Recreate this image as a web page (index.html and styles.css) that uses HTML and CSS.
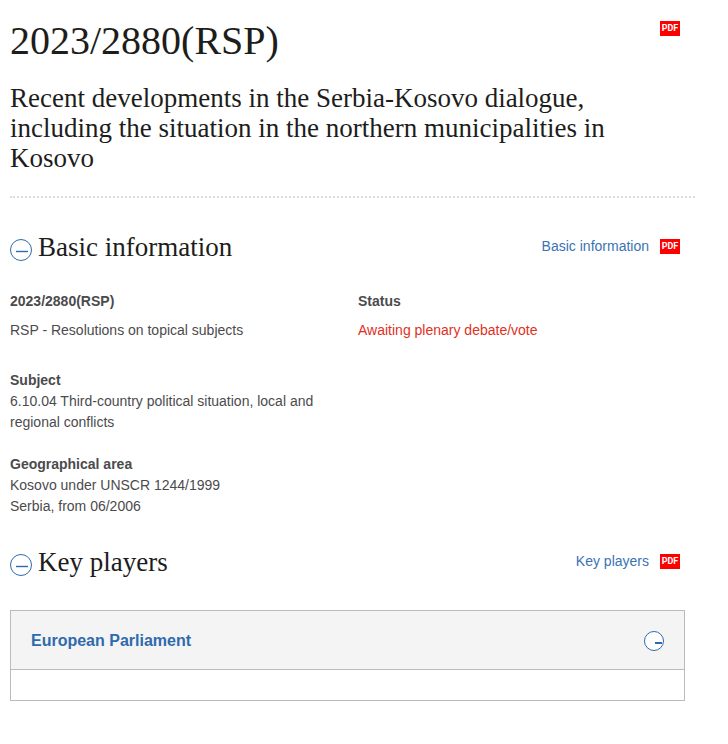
FILE: index.html
```html
<!DOCTYPE html>
<html lang="en">
<head>
  <meta charset="UTF-8" />
  <meta name="viewport" content="width=device-width, initial-scale=1.0"/>
  <title>Procedure File: 2023/2880(RSP)</title>
  <link rel="stylesheet" href="styles.css">
</head>
<body>
  <header class="page-header">
    <div class="title-row">
      <h1>2023/2880(RSP)</h1>
      <a class="pdf" href="#">PDF</a>
    </div>
    <p class="subtitle">Recent developments in the Serbia-Kosovo dialogue, including the situation in the northern municipalities in Kosovo</p>
  </header>

  <main>
    <!-- Basic information -->
    <section>
      <div class="section-head">
        <button class="toggle" type="button" aria-label="Collapse Basic information">
          <svg width="22" height="22" viewBox="0 0 22 22"><circle cx="11" cy="11" r="10.5"/><path stroke-width="1.4" d="M6 12.5h12"/></svg>
        </button>
        <h2>Basic information</h2>
        <a class="section-link" href="#">Basic information</a>
        <a class="pdf" href="#">PDF</a>
      </div>
      <div class="columns">
        <div class="col">
          <h3>2023/2880(RSP)</h3>
          <p class="spaced">RSP - Resolutions on topical subjects</p>
          <h3>Subject</h3>
          <p>6.10.04 Third-country political situation, local and regional conflicts</p>
          <h3>Geographical area</h3>
          <p>Kosovo under UNSCR 1244/1999<br>Serbia, from 06/2006</p>
        </div>
        <div class="col">
          <h3>Status</h3>
          <p class="spaced status">Awaiting plenary debate/vote</p>
        </div>
      </div>
    </section>

    <!-- Key players -->
    <section>
      <div class="section-head">
        <button class="toggle" type="button" aria-label="Collapse Key players">
          <svg width="22" height="22" viewBox="0 0 22 22"><circle cx="11" cy="11" r="10.5"/><path stroke-width="1.4" d="M6 12.5h12"/></svg>
        </button>
        <h2>Key players</h2>
        <a class="section-link" href="#">Key players</a>
        <a class="pdf" href="#">PDF</a>
      </div>
      <div class="panel">
        <div class="panel-head">
          <h3>European Parliament</h3>
          <button class="toggle toggle-filled" type="button" aria-label="Expand European Parliament">
            <svg width="20" height="20" viewBox="0 0 20 20"><circle cx="10" cy="10" r="9.5"/><path stroke-width="2" d="M11 12h7"/></svg>
          </button>
        </div>
        <div class="panel-body"></div>
      </div>
    </section>
  </main>
</body>
</html>
```
FILE: styles.css
```css
body {
  margin: 0;
  padding: 16px 33px 24px 10px;
  background: #fff;
  color: #4b4b4d;
  font-family: Arial, "Liberation Sans", sans-serif;
  font-size: 14px;
  line-height: 21px;
}

h1, h2, h3, p {
  margin: 0;
}

h1, h2, .subtitle {
  color: #1d1d1b;
  font-family: Georgia, "Liberation Serif", serif;
  font-weight: normal;
}

a {
  color: #3a73b5;
  text-decoration: none;
}

.page-header {
  padding-bottom: 23px;
  border-bottom: 2px dotted #dcdcdc;
}

.title-row {
  display: flex;
  justify-content: space-between;
  align-items: flex-start;
  padding: 5px 15px 0 0;
}

h1 {
  font-size: 40px;
  line-height: 40px;
}

.subtitle {
  margin-top: 22px;
  padding-right: 60px;
  font-size: 27px;
  line-height: 30px;
}

.pdf {
  width: 20px;
  height: 15px;
  background: #f00;
  color: #fff;
  font-family: "Liberation Sans Narrow", Roboto, sans-serif;
  font-size: 9px;
  font-weight: bold;
  line-height: 15px;
  text-align: center;
}

.section-head {
  display: flex;
  align-items: center;
  padding-right: 15px;
  margin-top: 32px;
}

h2 {
  flex: 1;
  padding-top: 2px;
  margin-left: 6px;
  font-size: 27px;
  line-height: 30px;
}

.section-link {
  margin-right: 11px;
}

.toggle {
  display: flex;
  padding: 0;
  border: none;
  background: none;
  cursor: pointer;
}

.section-head .toggle {
  margin-top: 8px;
}

.toggle svg {
  fill: none;
  stroke: #2f6aae;
}

.toggle-filled circle {
  fill: #fff;
}

.columns {
  display: grid;
  grid-template-columns: 1fr 1fr;
  gap: 22px;
  padding-right: 11px;
  margin-top: 29px;
}

.col h3 {
  font-size: 14px;
}

.col p {
  margin-bottom: 21px;
}

.col .spaced {
  margin: 8px 0 29px;
}

.col .status {
  color: #e0301e;
}

section + section .section-head {
  margin-top: 7px;
}

.panel {
  margin: 33px 10px 0 0;
  border: 1px solid #bbb;
}

.panel-head {
  display: flex;
  justify-content: space-between;
  align-items: center;
  padding: 19px 20px 17px;
  border-bottom: 1px solid #bbb;
  background: #f4f4f4;
}

.panel-head h3 {
  padding-bottom: 1px;
  color: #2f6aae;
  font-size: 16px;
}

.panel-body {
  height: 30px;
}
```
